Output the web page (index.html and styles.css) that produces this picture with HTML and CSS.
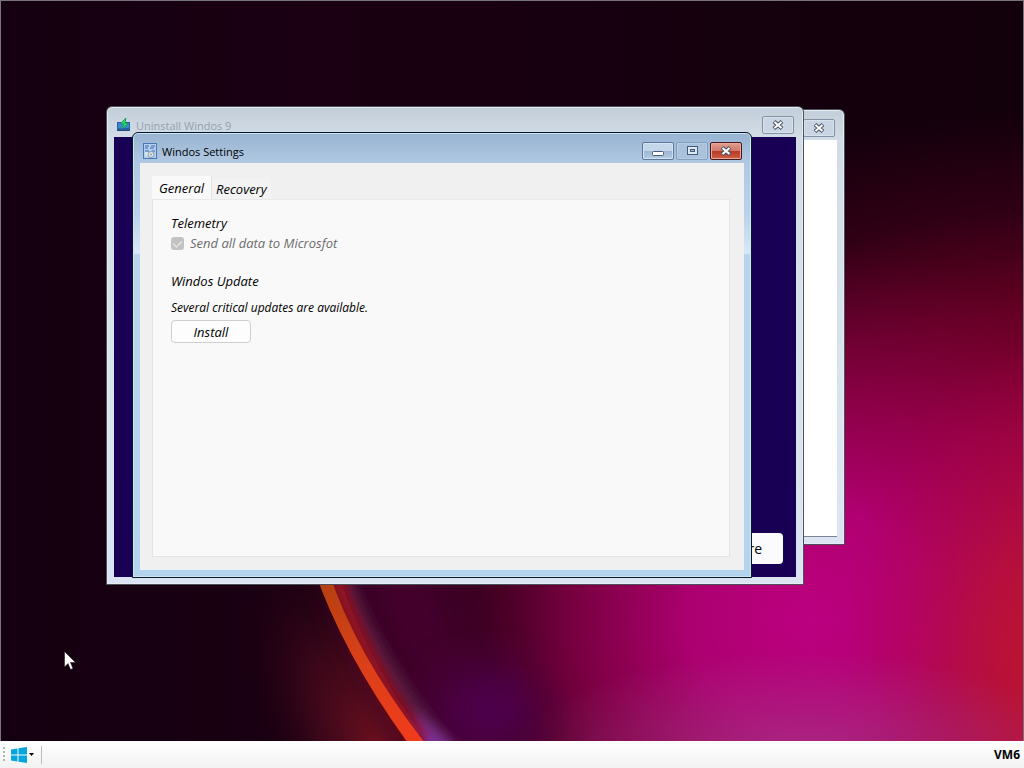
FILE: index.html
```html
<!DOCTYPE html>
<html lang="en">
<head>
    <meta charset="utf-8">
    <meta name="viewport" content="width=device-width, initial-scale=1.0">
    <title>Windos</title>
    <link rel="stylesheet" href="styles.css">
</head>
<body>
    <main class="desktop">
        <svg class="wallpaper" viewBox="0 0 1024 741" preserveAspectRatio="none" aria-hidden="true">
            <defs>
                <linearGradient id="base" x1="0" y1="0" x2="1" y2="0">
                    <stop offset="0" stop-color="#140010"/>
                    <stop offset="0.3" stop-color="#1a0012"/>
                    <stop offset="1" stop-color="#12000b"/>
                </linearGradient>
                <radialGradient id="red" gradientUnits="userSpaceOnUse" cx="0" cy="0" r="1" gradientTransform="translate(1040 620) scale(640 510)">
                    <stop offset="0" stop-color="#c01030"/>
                    <stop offset="0.35" stop-color="#a00034"/>
                    <stop offset="0.6" stop-color="#660022"/>
                    <stop offset="0.8" stop-color="#300014"/>
                    <stop offset="1" stop-color="#300014" stop-opacity="0"/>
                </radialGradient>
                <radialGradient id="pink" gradientUnits="userSpaceOnUse" cx="0" cy="0" r="1" gradientTransform="translate(810 620) scale(400 380)">
                    <stop offset="0" stop-color="#bc0080"/>
                    <stop offset="0.3" stop-color="#b20078" stop-opacity="0.9"/>
                    <stop offset="0.6" stop-color="#920054" stop-opacity="0.65"/>
                    <stop offset="1" stop-color="#600038" stop-opacity="0"/>
                </radialGradient>
                <radialGradient id="edge" gradientUnits="userSpaceOnUse" cx="0" cy="0" r="1" gradientTransform="translate(1060 660) scale(220 320)">
                    <stop offset="0" stop-color="#c01826"/>
                    <stop offset="0.4" stop-color="#bc1238" stop-opacity="0.7"/>
                    <stop offset="1" stop-color="#b00050" stop-opacity="0"/>
                </radialGradient>
                <radialGradient id="haze" gradientUnits="userSpaceOnUse" cx="0" cy="0" r="1" gradientTransform="translate(800 770) scale(300 120)">
                    <stop offset="0" stop-color="#a84090" stop-opacity="0.7"/>
                    <stop offset="1" stop-color="#a84090" stop-opacity="0"/>
                </radialGradient>
                <radialGradient id="ember" gradientUnits="userSpaceOnUse" cx="0" cy="0" r="1" gradientTransform="translate(380 750) rotate(-30) scale(100 220)">
                    <stop offset="0" stop-color="#701020"/>
                    <stop offset="0.5" stop-color="#480a1c" stop-opacity="0.7"/>
                    <stop offset="1" stop-color="#280014" stop-opacity="0"/>
                </radialGradient>
                <linearGradient id="arc" x1="0" y1="0" x2="0" y2="1">
                    <stop offset="0" stop-color="#b04010"/>
                    <stop offset="0.5" stop-color="#d84018"/>
                    <stop offset="1" stop-color="#f03c1c"/>
                </linearGradient>
                <filter id="soft" filterUnits="userSpaceOnUse" x="200" y="450" width="500" height="400"><feGaussianBlur stdDeviation="7"/></filter>
                <filter id="softer" filterUnits="userSpaceOnUse" x="100" y="350" width="700" height="500"><feGaussianBlur stdDeviation="24"/></filter>
            </defs>
            <rect width="1024" height="741" fill="url(#base)"/>
            <rect width="1024" height="741" fill="url(#red)"/>
            <rect width="1024" height="741" fill="url(#pink)"/>
            <rect width="1024" height="741" fill="url(#edge)"/>
            <rect width="1024" height="741" fill="url(#haze)"/>
            <rect width="1024" height="741" fill="url(#ember)"/>
            <path d="M330 540Q360 660 450 780H540Q470 640 450 540Z" fill="#42002c" filter="url(#softer)"/>
            <ellipse cx="490" cy="710" rx="50" ry="40" fill="#500050" filter="url(#softer)"/>
            <path d="M340 570Q370 662 446 750" fill="none" stroke="#582048" stroke-width="16" filter="url(#soft)"/>
            <path d="M410 710L425 756H465Z" fill="#8030a0" filter="url(#soft)"/>
            <path d="M332 570Q358 655 420 742" fill="none" stroke="#c00c10" stroke-width="11" filter="url(#soft)"/>
            <path d="M314 570Q342 652 407 742H424Q354 652 328 570Z" fill="url(#arc)"/>
        </svg>

        <section class="window window--plain" aria-label="Background window">
            <header class="titlebar">
                <div class="controls">
                    <button class="control" type="button" aria-label="Close">
                        <svg class="glyph" viewBox="0 0 12 10"><path class="glyph-outline" d="M2 1.500L10 8.500M10 1.500L2 8.500"/><path class="glyph-fill" d="M2.500 2L9.500 8M9.500 2L2.500 8"/></svg>
                    </button>
                </div>
            </header>
            <div class="content"></div>
        </section>

        <section class="window window--uninstall" aria-label="Uninstall Windos 9">
            <header class="titlebar">
                <svg class="icon" viewBox="0 0 16 16"><path d="M1 5H14V14H1Z" fill="#2860a8"/><path d="M2 6H13V11H2Z" fill="#3888c8"/><path d="M1 13H14V14H1Z" fill="#304878"/><path d="M10 1L5 6L8 7L5 12L12 7L9 6Z" fill="#28e068" stroke="#20a060"/></svg>
                <h2 class="title">Uninstall Windos 9</h2>
                <div class="controls">
                    <button class="control" type="button" aria-label="Close">
                        <svg class="glyph" viewBox="0 0 12 10"><path class="glyph-outline" d="M2 1.500L10 8.500M10 1.500L2 8.500"/><path class="glyph-fill" d="M2.500 2L9.500 8M9.500 2L2.500 8"/></svg>
                    </button>
                </div>
            </header>
            <div class="content">
                <button class="restore" type="button">Restore</button>
            </div>
        </section>

        <section class="window window--settings" aria-label="Windos Settings">
            <header class="titlebar">
                <svg class="icon" viewBox="0 0 16 16"><rect x="1.500" y=".5" width="13" height="15" fill="#b4d0f0" stroke="#4878b8"/><path d="M3 3H7M9 3H13M3 5H6M8 5H12M3 8H7M10 8H13" stroke="#3868b0"/><path d="M3 10H6M3 12H6" stroke="#f4faff"/><circle cx="9" cy="11.500" r="3" fill="#e4e8e4" stroke="#8898a8"/><circle cx="9" cy="11.500" r="1" fill="#8898a8"/></svg>
                <h1 class="title">Windos Settings</h1>
                <div class="controls">
                    <button class="control" type="button" aria-label="Minimize">
                        <svg class="glyph" viewBox="0 0 12 10"><rect x=".5" y="5.500" width="11" height="4" rx="1" fill="#fff" stroke="#465a78"/></svg>
                    </button>
                    <button class="control control--faded" type="button" aria-label="Maximize">
                        <svg class="glyph" viewBox="0 0 12 10"><rect x="1.500" y=".5" width="10" height="8" fill="#dce8f4" stroke="#465a78"/><rect x="4.500" y="3.500" width="4" height="2" fill="#a8bcd4" stroke="#465a78"/></svg>
                    </button>
                    <button class="control control--close" type="button" aria-label="Close">
                        <svg class="glyph" viewBox="0 0 12 10"><path class="glyph-outline" d="M2 1.500L10 8.500M10 1.500L2 8.500"/><path class="glyph-fill" d="M2.500 2L9.500 8M9.500 2L2.500 8"/></svg>
                    </button>
                </div>
            </header>
            <div class="content">
                <div class="tabs" role="tablist">
                    <button class="tab tab--active" id="tab-general" type="button" role="tab" aria-selected="true" aria-controls="general">General</button>
                    <button class="tab" type="button" role="tab" aria-selected="false">Recovery</button>
                </div>
                <div class="panel" id="general" role="tabpanel" aria-labelledby="tab-general">
                    <h3 class="heading">Telemetry</h3>
                    <div class="check">
                        <input class="checkbox" type="checkbox" id="telemetry" checked disabled>
                        <label for="telemetry">Send all data to Microsfot</label>
                    </div>
                    <h3 class="heading">Windos Update</h3>
                    <p class="note">Several critical updates are available.</p>
                    <button class="install" type="button">Install</button>
                </div>
            </div>
        </section>

        <svg class="cursor" viewBox="0 0 12 19" aria-hidden="true"><path d="M.5 .5V16L4 12.500L6.500 18.500L9 17.500L6.500 11.500H11.500Z" fill="#fff" stroke="#180810" stroke-width=".5"/></svg>
    </main>

    <footer class="taskbar">
        <span class="grip"></span>
        <button class="start" type="button" aria-label="Start">
            <svg class="logo" viewBox="0 0 16 16"><path d="M0 2.500L6.500 1.500V7.500H0ZM7.500 1.300L16 0V7.500H7.500ZM0 8.500H6.500V14.500L0 13.500ZM7.500 8.500H16V16L7.500 14.700Z" fill="#04a6dc"/></svg>
            <svg class="caret" viewBox="0 0 5 3"><path d="M0 0H5L2.500 3Z"/></svg>
        </button>
        <span class="machine">VM6</span>
    </footer>
</body>
</html>
```
FILE: styles.css
```css
:root {
    --ff: 'Open Sans', 'Noto Sans', sans-serif;
    --edge: #4c5058;
}

* {
    box-sizing: border-box;
}

body {
    font-family: var(--ff);
    font-size: 12px;
    line-height: 16px;
    color: #000;

    margin: 0;
    height: 100vh;

    display: flex;
    flex-direction: column;
}

button {
    font: inherit;
    color: inherit;
    padding: 0;
}

h1, h2, h3, p {
    font-size: inherit;
    font-weight: normal;
    margin: 0;
}

.desktop {
    position: relative;
    flex: 1;
    overflow: hidden;
    border: 1px solid #77747a;
    border-width: 1px 1px 0 1px;
}
.wallpaper {
    position: absolute;
    inset: 0;
    width: 100%;
    height: 100%;
}

/* Windows */
.window {
    position: absolute;
    border: 1px solid var(--edge);
    border-radius: 6px 6px 0 0;
    background: linear-gradient(#c2ced9, #d2dce6 30px, #d8e4ec 60%, #dce4f4);
    box-shadow: inset 0 0 0 1px #e4ecf4;
    padding: 0 7px 7px;

    display: flex;
    flex-direction: column;
}
.window--plain {
    left: 159px;
    top: 108px;
    width: 685px;
    height: 436px;
}
.window--uninstall {
    left: 105px;
    top: 105px;
    width: 698px;
    height: 479px;
}
.window--settings {
    left: 131px;
    top: 131px;
    width: 620px;
    height: 446px;
    border-color: #081828;
    background: linear-gradient(#98b4d2, #b0c8e2 30px, #b9d1ea 80px, #d8e8f8 120px, #b8d4ec 122px, #b4d4ee);
    box-shadow: inset 0 0 0 1px #cce4f4;
}
.titlebar {
    flex: none;
    height: 30px;
    padding-top: 6px;

    display: flex;
    align-items: center;
}
.title {
    padding-top: 1px;
    font-size: 11px;
}
.window--uninstall .titlebar {
    color: #96a0aa;
}
.icon {
    width: 16px;
    height: 16px;
    margin: 0 4px 0 2px;
}
.controls {
    margin-left: auto;
    margin-right: 2px;

    display: flex;
    gap: 2px;
}
.control {
    width: 32px;
    height: 18px;
    border: 1px solid #8490a4;
    border-radius: 2px;
    background: #c9d5e2;
    box-shadow: inset 0 0 0 1px #d8e2ec;

    display: flex;
    justify-content: center;
    align-items: center;
}
.window--settings .control {
    border-color: #5c789c;
    background: linear-gradient(#c4d6ea 50%, #9cb6d2 50%, #b4cce4);
    box-shadow: inset 0 0 0 1px #d4e2f0;
}
.window--settings .control--faded {
    border-color: #839fc0;
    background: #abc2dc;
    box-shadow: inset 0 0 0 1px #b8cce2;
}
.window--settings .control--close {
    border-color: #481820;
    background: linear-gradient(#e0a090, #d07868 50%, #b83820 50%, #d06048);
    box-shadow: inset 0 0 0 1px #e8a898;
}
.glyph {
    width: 12px;
    height: 10px;
}
.glyph-outline {
    fill: none;
    stroke: #4c5468;
    stroke-width: 4;
}
.glyph-fill {
    fill: none;
    stroke: #fff;
    stroke-width: 2;
}
.content {
    flex: 1;
    background: #fff;
}
.window--plain .content {
    border-bottom: 1px solid #7c8494;
}
.window--uninstall .content {
    background: #180054;
    padding: 13px;

    display: flex;
    justify-content: flex-end;
    align-items: flex-end;
}
.restore {
    font-size: 14px;
    width: 92px;
    height: 31px;
    border: 0;
    border-radius: 4px;
    background: #fbfbfd;
}

/* Settings */
.window--settings .content {
    font-size: 13px;
    font-style: italic;
    background: #f0f0f0;
    padding: 13px 14px 13px 12px;

    display: flex;
    flex-direction: column;
}
.tabs {
    display: flex;
    align-items: flex-end;
}
.tab {
    font-style: italic;
    height: 20px;
    padding: 0 4px;
    border: 0;
    background: #f3f3f3;
}
.tab--active {
    height: 23px;
    padding: 0 7px;
    border-right: 1px solid #e2e2e2;
    background: #f9f9f9;
}
.panel {
    flex: 1;
    border: 1px solid #e4e4e4;
    border-top-color: #e9e9e9;
    background: #f9f9f9;
    padding: 15px 18px;
}
.check {
    color: #6c6c6c;
    margin: 4px 0 22px;

    display: flex;
    align-items: center;
    gap: 6px;
}
.checkbox {
    appearance: none;
    width: 13px;
    height: 13px;
    margin: 0;
    border-radius: 3px;
    background: #c3c3c3;

    display: flex;
    justify-content: center;
}
.checkbox:checked::before {
    content: '';
    width: 4px;
    height: 7px;
    margin-top: 2px;
    border: solid #f4f4f4;
    border-width: 0 1px 1px 0;
    transform: rotate(45deg);
}
.note {
    font-size: 12px;
    margin: 11px 0 4px;
}
.install {
    font-style: italic;
    width: 80px;
    height: 23px;
    border: 1px solid #cfcfcf;
    border-radius: 4px;
    background: #fdfdfd;
}

.cursor {
    position: absolute;
    left: 63px;
    top: 650px;
    width: 12px;
    height: 19px;
}

/* Taskbar */
.taskbar {
    flex: none;
    height: 27px;
    padding: 0 4px 0 3px;
    background: linear-gradient(#fff, #f2f2f2);

    display: flex;
    align-items: center;
}
.grip {
    width: 2px;
    height: 16px;
    margin-right: 6px;
    background: repeating-linear-gradient(#b4b4b4 0 2px, transparent 2px 4px);
}
.start {
    height: 18px;
    padding-right: 7px;
    border: 0;
    border-right: 1px solid #bcbcbc;
    background: none;

    display: flex;
    align-items: center;
    gap: 2px;
}
.logo {
    width: 16px;
    height: 16px;
}
.caret {
    width: 5px;
    height: 3px;
}
.machine {
    font-weight: bold;
    margin-left: auto;
}
```
